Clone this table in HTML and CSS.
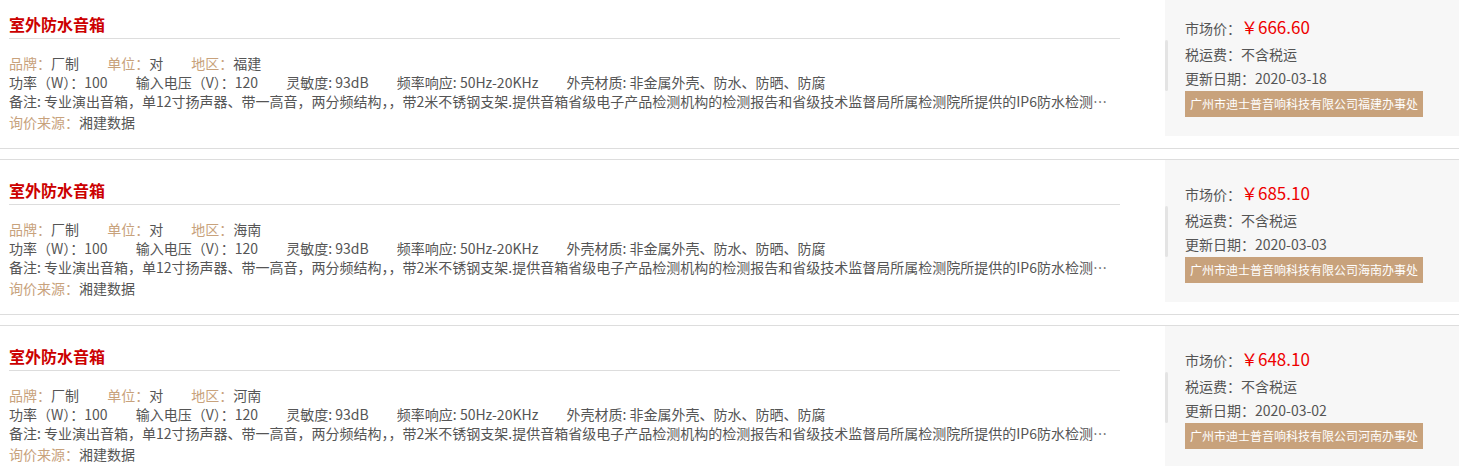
FILE: index.html
```html
<!DOCTYPE html>
<html>
<head>
    <meta charset="utf-8">
    <title>询价列表</title>
    <link rel="stylesheet" href="styles.css">
</head>
<body>
    <div class="price-list">

        <div class="price-item">
            <div class="item-main">
                <h3 class="item-title">室外防水音箱</h3>
                <div class="item-row">
                    <span class="field"><em>品牌：</em>厂制</span>
                    <span class="field"><em>单位：</em>对</span>
                    <span class="field"><em>地区：</em>福建</span>
                </div>
                <div class="item-row">
                    <span class="field">功率（W）：100</span>
                    <span class="field">输入电压（V）：120</span>
                    <span class="field">灵敏度: 93dB</span>
                    <span class="field">频率响应: 50Hz-20KHz</span>
                    <span class="field">外壳材质: 非金属外壳、防水、防晒、防腐</span>
                </div>
                <div class="item-row note">备注: 专业演出音箱，单12寸扬声器、带一高音，两分频结构，，带2米不锈钢支架.提供音箱省级电子产品检测机构的检测报告和省级技术监督局所属检测院所提供的IP6防水检测报告及相关证书。</div>
                <div class="item-row source"><em>询价来源：</em>湘建数据</div>
            </div>
            <div class="item-side">
                <div class="side-row price-row">市场价：<span class="price">￥666.60</span></div>
                <div class="side-row">税运费：不含税运</div>
                <div class="side-row">更新日期：2020-03-18</div>
                <div class="supplier">广州市迪士普音响科技有限公司福建办事处</div>
            </div>
        </div>

        <div class="price-item">
            <div class="item-main">
                <h3 class="item-title">室外防水音箱</h3>
                <div class="item-row">
                    <span class="field"><em>品牌：</em>厂制</span>
                    <span class="field"><em>单位：</em>对</span>
                    <span class="field"><em>地区：</em>海南</span>
                </div>
                <div class="item-row">
                    <span class="field">功率（W）：100</span>
                    <span class="field">输入电压（V）：120</span>
                    <span class="field">灵敏度: 93dB</span>
                    <span class="field">频率响应: 50Hz-20KHz</span>
                    <span class="field">外壳材质: 非金属外壳、防水、防晒、防腐</span>
                </div>
                <div class="item-row note">备注: 专业演出音箱，单12寸扬声器、带一高音，两分频结构，，带2米不锈钢支架.提供音箱省级电子产品检测机构的检测报告和省级技术监督局所属检测院所提供的IP6防水检测报告及相关证书。</div>
                <div class="item-row source"><em>询价来源：</em>湘建数据</div>
            </div>
            <div class="item-side">
                <div class="side-row price-row">市场价：<span class="price">￥685.10</span></div>
                <div class="side-row">税运费：不含税运</div>
                <div class="side-row">更新日期：2020-03-03</div>
                <div class="supplier">广州市迪士普音响科技有限公司海南办事处</div>
            </div>
        </div>

        <div class="price-item">
            <div class="item-main">
                <h3 class="item-title">室外防水音箱</h3>
                <div class="item-row">
                    <span class="field"><em>品牌：</em>厂制</span>
                    <span class="field"><em>单位：</em>对</span>
                    <span class="field"><em>地区：</em>河南</span>
                </div>
                <div class="item-row">
                    <span class="field">功率（W）：100</span>
                    <span class="field">输入电压（V）：120</span>
                    <span class="field">灵敏度: 93dB</span>
                    <span class="field">频率响应: 50Hz-20KHz</span>
                    <span class="field">外壳材质: 非金属外壳、防水、防晒、防腐</span>
                </div>
                <div class="item-row note">备注: 专业演出音箱，单12寸扬声器、带一高音，两分频结构，，带2米不锈钢支架.提供音箱省级电子产品检测机构的检测报告和省级技术监督局所属检测院所提供的IP6防水检测报告及相关证书。</div>
                <div class="item-row source"><em>询价来源：</em>湘建数据</div>
            </div>
            <div class="item-side">
                <div class="side-row price-row">市场价：<span class="price">￥648.10</span></div>
                <div class="side-row">税运费：不含税运</div>
                <div class="side-row">更新日期：2020-03-02</div>
                <div class="supplier">广州市迪士普音响科技有限公司河南办事处</div>
            </div>
        </div>

    </div>
</body>
</html>
```

FILE: styles.css
```css
body {
    margin: 0;
    font-family: "Noto Sans CJK SC", "Microsoft YaHei", sans-serif;
    font-size: 14px;
    color: #555;
    background-color: #fff;
}

.price-list {
    margin-top: -7px;
}

.price-item {
    display: flex;
    border-top: 1px solid #ddd;
    border-bottom: 1px solid #ddd;
    margin-bottom: 10px;
    padding-bottom: 12px;
}

.item-main {
    flex: 1;
    min-width: 0;
    padding-left: 9px;
    margin-right: 45px;
}

.item-title {
    margin: 0;
    padding-top: 19px;
    padding-bottom: 3px;
    font-size: 16px;
    line-height: 22px;
    font-weight: bold;
    color: #c00;
    border-bottom: 1px solid #ddd;
    margin-bottom: 15px;
}

.item-row {
    line-height: 19px;
    white-space: nowrap;
}

.item-row em {
    font-style: normal;
    color: #c8a27c;
}

.field {
    margin-right: 25px;
}

.note {
    overflow: hidden;
    text-overflow: ellipsis;
}

.source {
    margin-top: 2px;
}

.item-side {
    position: relative;
    width: 274px;
    height: 123px;
    padding: 19px 0 0 20px;
    background-color: #f7f7f7;
}

.item-side::before {
    content: "";
    position: absolute;
    left: 0;
    top: 46px;
    width: 3px;
    height: 51px;
    background-color: #e4e4e4;
    border-radius: 2px;
}

.side-row {
    line-height: 24px;
}

.price-row {
    line-height: 28px;
}

.price {
    font-size: 17px;
    color: #e00;
}

.supplier {
    display: inline-block;
    margin-top: 1px;
    padding: 0 5px;
    height: 26px;
    line-height: 26px;
    font-size: 12px;
    color: #fff;
    background-color: #c8a27c;
}
```
